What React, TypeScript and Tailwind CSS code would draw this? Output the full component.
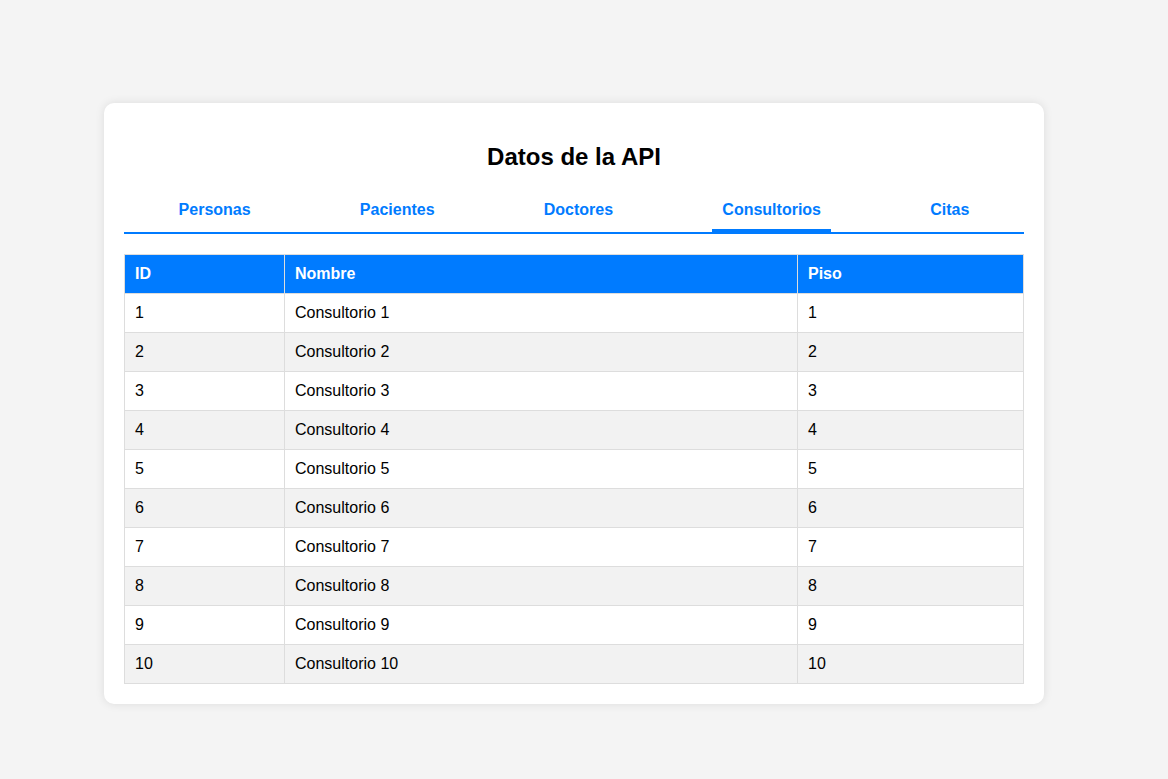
import { useState } from 'react';

const tabs = ['Personas', 'Pacientes', 'Doctores', 'Consultorios', 'Citas'];

const consultorios = Array.from({ length: 10 }, (_, i) => ({
  id: i + 1,
  nombre: `Consultorio ${i + 1}`,
  piso: i + 1,
}));

export default function App() {
  const [active, setActive] = useState('Consultorios');

  return (
    <div
      className="min-h-[779px] bg-[#f4f4f4] pt-[103px] pr-[20px] text-black"
      style={{ fontFamily: '"Liberation Sans", Arial, sans-serif' }}
    >
      <div className="mx-auto w-[940px] rounded-[10px] bg-white p-5 shadow-[0_0_10px_rgba(0,0,0,0.1)]">
        <h2 className="my-5 text-center text-2xl font-bold leading-[27px]">Datos de la API</h2>

        {/* Tabs */}
        <div className="mb-5 flex justify-around border-b-2 border-[#007bff]">
          {tabs.map((tab) => (
            <button
              key={tab}
              onClick={() => setActive(tab)}
              className={`h-[42px] border-b-[3px] px-[10px] pt-px text-base font-bold text-[#007bff] ${
                active === tab ? 'border-[#007bff]' : 'border-transparent'
              }`}
            >
              {tab}
            </button>
          ))}
        </div>

        {/* Table */}
        <table className="w-full border-collapse text-base">
          <thead>
            <tr className="bg-[#007bff] text-white">
              <th className="w-[160px] border border-[#ddd] px-[10px] py-[10px] text-left font-bold leading-[18px]">ID</th>
              <th className="w-[513px] border border-[#ddd] px-[10px] py-[10px] text-left font-bold leading-[18px]">Nombre</th>
              <th className="border border-[#ddd] px-[10px] py-[10px] text-left font-bold leading-[18px]">Piso</th>
            </tr>
          </thead>
          <tbody>
            {consultorios.map((c, i) => (
              <tr key={c.id} className={i % 2 === 1 ? 'bg-[#f2f2f2]' : 'bg-white'}>
                <td className="border border-[#ddd] px-[10px] py-[10px] leading-[18px]">{c.id}</td>
                <td className="border border-[#ddd] px-[10px] py-[10px] leading-[18px]">{c.nombre}</td>
                <td className="border border-[#ddd] px-[10px] py-[10px] leading-[18px]">{c.piso}</td>
              </tr>
            ))}
          </tbody>
        </table>
      </div>
    </div>
  );
}
